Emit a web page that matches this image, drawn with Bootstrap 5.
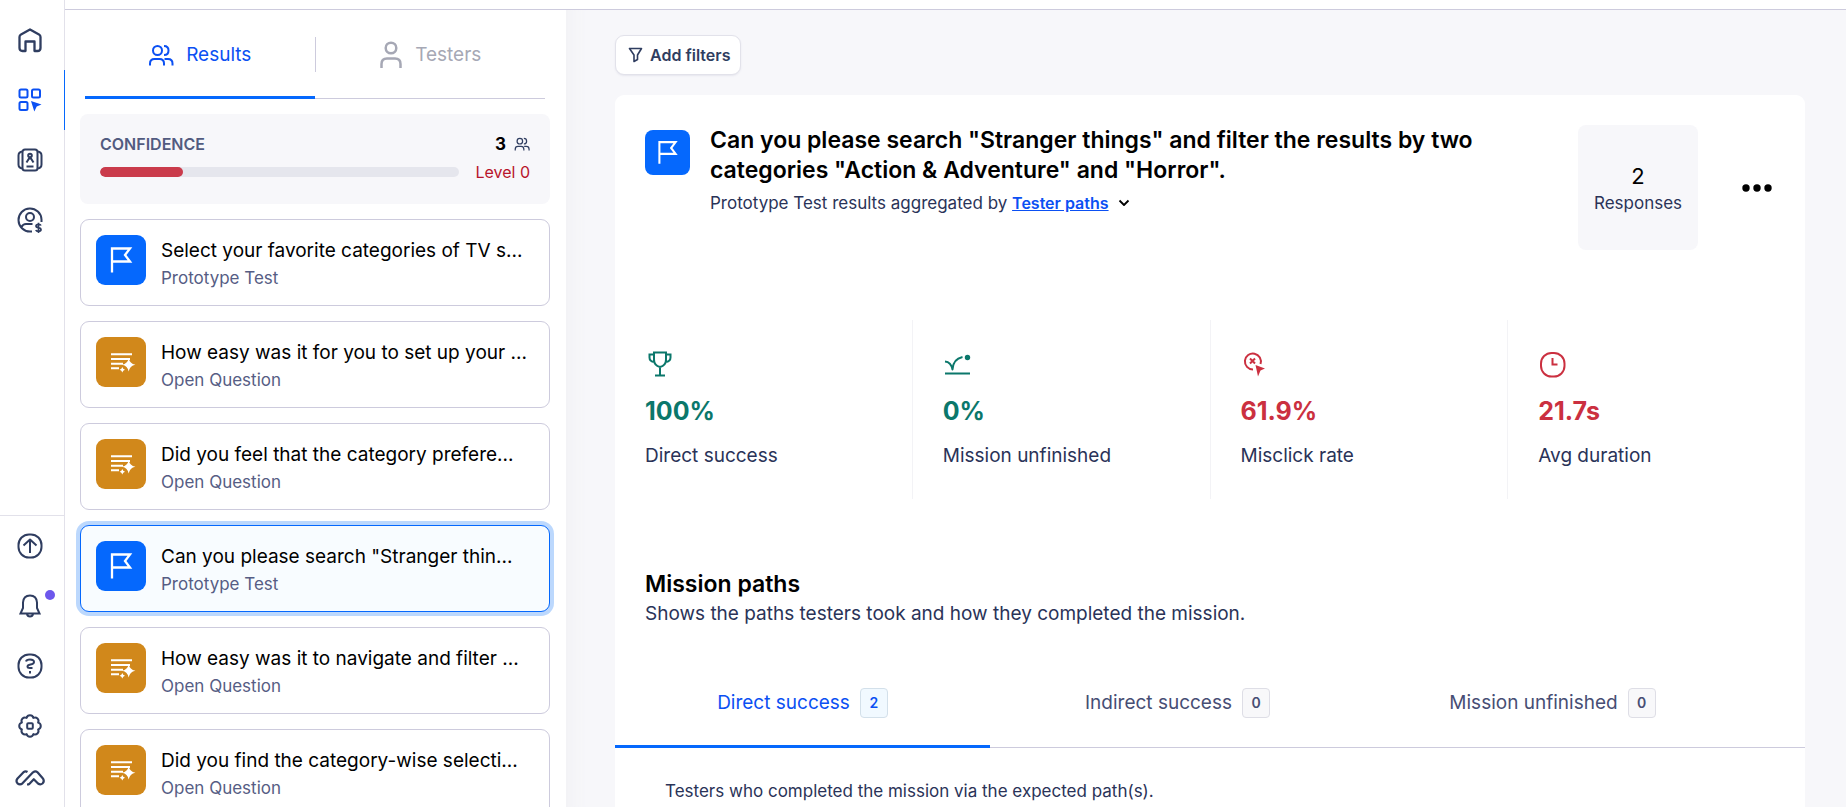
<!DOCTYPE html>
<html lang="en">
<head>
<meta charset="utf-8">
<meta name="viewport" content="width=device-width, initial-scale=1">
<title>Results</title>
<link href="https://cdn.jsdelivr.net/npm/bootstrap@5.3.0/dist/css/bootstrap.min.css" rel="stylesheet">
<style>
:root { --ink:#2f3d60; --blue:#0568fd; --link:#0b50f3; --line:#cdcbdd; --soft:#f7f7fa; }
body { font-family:Inter,"Liberation Sans",sans-serif; font-size:17px; line-height:26px; color:#2a3358; background:#fff; }
button { font:inherit; color:inherit; }
svg { display:block; flex:none; fill:none; stroke:currentColor; stroke-width:2; stroke-linejoin:round; }
.filled { fill:currentColor; stroke:none; }
.t19 { font-size:19px; line-height:30px; }
.t23 { font-size:23px; line-height:30px; font-weight:600; color:#000; }
.hide-bar { overflow:auto; scrollbar-width:none; }
.hide-bar::-webkit-scrollbar { display:none; }

/* icon rail */
.rail { width:65px; border-right:1px solid #e2e1ea; color:var(--ink); padding-top:10px; }
.rail a { position:relative; display:flex; align-items:center; justify-content:center; height:60px; padding-right:4px; color:inherit; }
.rail a.active { color:var(--link); }
.rail a.active::after { content:""; position:absolute; top:0; bottom:0; right:-1px; width:1px; background:var(--blue); }
.rail-foot { border-top:1px solid #e2e1ea; }
.rail .brand { height:51px; padding-bottom:8px; }
.dot { position:absolute; left:45px; top:14px; width:10px; height:10px; border-radius:50%; background:#6d57ec; }

.strip { height:10px; border-bottom:1px solid var(--line); }

/* question list */
.side { width:501px; padding:0 16px 15px 15px; gap:15px; }
.side > * { flex:none; }
.side-tabs { margin:0 5px; box-shadow:inset 0 -1px var(--line); }
.tabbtn { flex:1 1 0; display:flex; align-items:center; justify-content:center; border:0; border-bottom:3px solid transparent; background:none; padding:0; }
.tabbtn.active { color:var(--link); border-bottom-color:var(--blue); }
.side-tabs .tabbtn { height:89px; padding-top:3px; gap:12px; color:#a6a8b5; }
.side-tabs .tabbtn.active { color:var(--link); }
.rule { width:1px; height:35px; background:var(--line); }
.conf { background:var(--soft); border-radius:8px; padding:18px 20px 20px; line-height:24px; }
.conf-name { font-size:16px; font-weight:600; color:#525b80; }
.conf .progress { height:10px; border-radius:5px; background:#e5e6ed; }
.conf .progress-bar { background:#ca3b4b; border-radius:5px; }
.level { color:#b8142b; font-size:16px; }
.q { display:flex; gap:15px; width:100%; text-align:left; background:#fff; border:1px solid var(--line); border-radius:9px; padding:15px; }
.q.active { background:#f8fcff; border-color:var(--blue); box-shadow:0 0 0 4px #bcd8fd; }
.q-title { color:#000; line-height:32px; }
.q-kind { line-height:23px; color:#565d84; }
.tile { width:50px; height:50px; border-radius:9px; color:#fff; background:var(--blue); }
.tile.open { background:#d1881b; }
.tile.sm { width:45px; height:45px; margin-top:5px; border-radius:8px; }

/* detail area */
.detail { background:var(--soft); padding:25px 41px 0 49px; box-shadow:inset 24px 0 20px -20px #f1f1f4; }
.filter { display:flex; align-items:center; gap:7px; height:40px; padding:0 10px 0 12px; border:1px solid #e2e2ea; border-radius:9px; background:#fff; color:var(--ink); font-size:16px; font-weight:600; box-shadow:0 1px 2px #e6e6ee; }
.sheet { background:#fff; border-radius:9px; margin-top:20px; padding-bottom:60px; }
.head { padding:30px 30px 0; gap:20px; }
.head-by { padding-top:5px; }
.agg { color:var(--link); font-weight:600; font-size:16px; }
.count { width:120px; height:125px; border-radius:8px; background:var(--soft); margin-right:21px; padding-top:2px; }
.count-num { font-size:22px; line-height:28px; color:#000; }
.stats { margin-top:70px; }
.stat { flex:1 1 0; padding:30px 30px 28px; }
.stat + .stat { border-left:1px solid #f3f3f6; }
.stat-num { font-size:25px; line-height:36px; font-weight:700; margin:15px 0 12px; }
.good { color:#0b776b; }
.bad { color:#cb3040; }
.paths { padding:70px 30px 0; }
.path-tabs { margin-top:32px; padding-right:65px; box-shadow:inset 0 -1px var(--line); }
.path-tabs .tabbtn { height:87px; gap:10px; color:#474e74; }
.path-tabs .tabbtn.active { color:var(--link); }
.num { min-width:28px; height:30px; border:1px solid #dedee6; border-radius:4px; background:#f8f8fa; font-size:14px; line-height:28px; font-weight:600; }
.active .num { background:#f1f9ff; border-color:#d3e0ea; }
.note { padding:30px 50px 0; }
</style>
</head>
<body>
<svg class="d-none" aria-hidden="true">
  <symbol id="flag" viewBox="0 0 50 50"><path stroke-width="2.300" d="M16 37.500V13.500H34L29 20L34 26.500H16" stroke-linejoin="miter"/></symbol>
  <symbol id="ask" viewBox="0 0 50 50"><path d="M15 17.300H36M15 22H34M15 26.700H27M15 31.300H23"/><path class="filled" d="M32.700 21Q33.700 26.700 39.400 27.700Q33.700 28.700 32.700 34.400Q31.700 28.700 26 27.700Q31.700 26.700 32.700 21ZM26.300 30Q26.800 32.200 29 32.700Q26.800 33.200 26.300 35.400Q25.800 33.200 23.600 32.700Q25.800 32.200 26.300 30Z"/></symbol>
  <symbol id="people" viewBox="0 0 26 22"><path d="M2 21.500V19.500Q2 15 6.500 15H11.500Q16 15 16 19.500V21.500M16.500 15H20Q24.500 15 24.500 19.500V21.500"/><circle cx="9.500" cy="6.500" r="4.500"/><path d="M16 2Q20.500 2 20.500 6.500T16 11"/></symbol>
</svg>
<div class="d-flex vh-100 overflow-hidden">
  <nav class="rail d-flex flex-column flex-shrink-0" aria-label="Main">
    <a href="#" aria-label="Home"><svg width="26" height="26"><path stroke-width="2.300" d="M13 2.500L22 7.500Q23.500 8.300 23.500 10V21Q23.500 24 20.500 24H17.500V14.500H8.500V24H5.500Q2.500 24 2.500 21V10Q2.500 8.300 4 7.500Z"/></svg></a>
    <a href="#" class="active" aria-label="Projects"><svg width="26" height="26" stroke-width="2.500"><rect x="2.500" y="2.500" width="8" height="8" rx="1.500"/><rect x="15" y="2.500" width="8" height="8" rx="1.500"/><rect x="2.500" y="15" width="8" height="8" rx="1.500"/><path class="filled" d="M14 14L24.500 17.500L19.700 19.500L17.300 24.500Z"/></svg></a>
    <a href="#" aria-label="Panel"><svg width="26" height="26"><rect x="5.500" y="2.500" width="15" height="21" rx="2.500"/><path d="M5.500 4.500Q1.500 5 1.500 8.500V17.500Q1.500 21 5.500 21.500M20.500 4.500Q24.500 5 24.500 8.500V17.500Q24.500 21 20.500 21.500M9.500 19.500H16.500"/><circle cx="13" cy="8.500" r="1.800"/><path d="M9.500 15.500L12 11.500H14L16.500 15.500"/></svg></a>
    <a href="#" aria-label="Billing"><svg width="26" height="26"><path d="M24.500 15V12.500A11.500 11.500 0 1 0 13 24.500H15M4.500 20Q6 17 9 17H15.500"/><circle cx="13" cy="10" r="4"/><path stroke-width="1.700" d="M24 18.500Q23.500 17.300 21.500 17.300Q19 17.300 19 19Q19 20.500 21.500 20.800Q24 21 24 22.700Q24 24.300 21.500 24.300Q19.300 24.300 18.800 23M21.500 15.800V26"/></svg></a>
    <div class="rail-foot mt-auto">
      <a href="#" aria-label="Upgrade"><svg width="26" height="26"><rect x="1.500" y="1.500" width="23" height="23" rx="10.500"/><path d="M13 20V6.500M6.500 12.500L13 6.500L19.500 12.500"/></svg></a>
      <a href="#" aria-label="Notifications"><svg width="26" height="26"><path d="M3.500 20.500H22.500L20 15V9.500Q19.500 2.500 13 2.500T6 9.500V15ZM10 21Q10.500 23.500 13 23.500T16 21" stroke-linejoin="miter"/></svg><span class="dot"></span></a>
      <a href="#" aria-label="Help"><svg width="26" height="26"><rect x="1.500" y="1.500" width="23" height="23" rx="10.500"/><path d="M9 8.500Q9.500 6.500 13 6.500Q17 6.500 17 9Q17 11 13.500 11.500Q10.500 12 10.500 13.500Q10.500 15 13 15H15.500M13 18V20.500"/></svg></a>
      <a href="#" aria-label="Settings"><svg width="26" height="26"><path d="M9.600 4.900A3.500 3.500 0 0 1 16.400 4.900A3.500 3.500 0 0 1 21.100 9.600A3.500 3.500 0 0 1 21.100 16.400A3.500 3.500 0 0 1 16.400 21.100A3.500 3.500 0 0 1 9.600 21.100A3.500 3.500 0 0 1 4.900 16.400A3.500 3.500 0 0 1 4.900 9.600A3.500 3.500 0 0 1 9.600 4.900Z"/><rect x="10.200" y="10.200" width="5.600" height="5.600" rx="1"/></svg></a>
      <a href="#" class="brand" aria-label="Workspace"><svg width="30" height="18"><path stroke-width="2.200" d="M12.500 3Q10.500 1.700 8.500 3.200L2.500 9.500Q.5 12 2.500 14.300Q5 16.500 7.500 14.300L18 3.300Q20.500 1.500 22.500 3.300L27.500 9Q30 12 27.500 14.500Q25.500 16.200 23 14.500L18.800 10.200L14.500 14.700Q13.800 15.500 12 15.500"/></svg></a>
    </div>
  </nav>

  <div class="d-flex flex-column flex-grow-1 overflow-hidden">
    <div class="strip flex-shrink-0"></div>
    <div class="d-flex flex-grow-1 overflow-hidden">
      <aside class="side hide-bar d-flex flex-column flex-shrink-0">
        <div class="side-tabs d-flex align-items-center" role="tablist">
          <button class="tabbtn t19 active" role="tab" aria-selected="true"><svg width="26" height="22" stroke-width="2.500"><use href="#people"/></svg>Results</button>
          <span class="rule"></span>
          <button class="tabbtn t19" role="tab" aria-selected="false"><svg width="24" height="28"><g stroke-width="2.500"><circle cx="12" cy="7" r="5.300"/><path d="M2.500 27V23Q2.500 17.500 8 17.500H16Q21.500 17.500 21.500 23V27"/></g></svg>Testers</button>
        </div>
        <section class="conf">
          <div class="d-flex justify-content-between align-items-center mb-1">
            <span class="conf-name">CONFIDENCE</span>
            <span class="d-flex align-items-center gap-2 fw-bold text-black">3<svg width="16" height="14" style="color:var(--ink)"><use href="#people"/></svg></span>
          </div>
          <div class="d-flex align-items-center gap-3">
            <div class="progress flex-grow-1" role="progressbar" aria-label="Confidence" aria-valuenow="23" aria-valuemin="0" aria-valuemax="100"><div class="progress-bar" style="width:23%"></div></div>
            <span class="level">Level 0</span>
          </div>
        </section>
        <button class="q"><svg class="tile"><use href="#flag"/></svg><span><span class="t19 q-title d-block">Select your favorite categories of TV s...</span><span class="q-kind d-block">Prototype Test</span></span></button>
        <button class="q"><svg class="tile open"><use href="#ask"/></svg><span><span class="t19 q-title d-block">How easy was it for you to set up your ...</span><span class="q-kind d-block">Open Question</span></span></button>
        <button class="q"><svg class="tile open"><use href="#ask"/></svg><span><span class="t19 q-title d-block">Did you feel that the category prefere...</span><span class="q-kind d-block">Open Question</span></span></button>
        <button class="q active"><svg class="tile"><use href="#flag"/></svg><span><span class="t19 q-title d-block">Can you please search "Stranger thin...</span><span class="q-kind d-block">Prototype Test</span></span></button>
        <button class="q"><svg class="tile open"><use href="#ask"/></svg><span><span class="t19 q-title d-block">How easy was it to navigate and filter ...</span><span class="q-kind d-block">Open Question</span></span></button>
        <button class="q"><svg class="tile open"><use href="#ask"/></svg><span><span class="t19 q-title d-block">Did you find the category-wise selecti...</span><span class="q-kind d-block">Open Question</span></span></button>
      </aside>

      <main class="detail hide-bar flex-grow-1">
        <button class="filter"><svg width="15" height="16"><path stroke-width="1.600" d="M1.500 1.500H13.500L9.500 8V12.500L6 14.500V8Z"/></svg>Add filters</button>
        <article class="sheet">
          <header class="head d-flex align-items-start">
            <svg class="tile sm"><use href="#flag"/></svg>
            <div class="flex-grow-1">
              <h1 class="t23 mb-0">Can you please search "Stranger things" and filter the results by two categories "Action &amp; Adventure" and "Horror".</h1>
              <div class="head-by d-flex align-items-center">Prototype Test results aggregated by&nbsp;<a class="agg" href="#">Tester paths</a><svg class="ms-2 text-black" width="14" height="10"><path d="M2.500 2.500L7 7L11.500 2.500" stroke-width="1.800"/></svg></div>
            </div>
            <div class="count d-flex flex-column align-items-center justify-content-center flex-shrink-0"><span class="count-num">2</span><span>Responses</span></div>
            <button class="border-0 bg-transparent p-0 align-self-center text-black" aria-label="More"><svg class="filled" width="36" height="10"><circle cx="7" cy="5" r="3.700"/><circle cx="18" cy="5" r="3.700"/><circle cx="29" cy="5" r="3.700"/></svg></button>
          </header>

          <section class="stats d-flex">
            <div class="stat"><svg class="good" width="30" height="28"><path d="M9 2.500H21V9.500Q21 15.500 15 17Q9 15.500 9 9.500ZM9 4.500H4.500V7.500Q4.500 11.500 9.500 12M21 4.500H25.500V7.500Q25.500 11.500 20.500 12M15 17V25.500M10 25.500H20" stroke-linejoin="miter"/></svg><div class="stat-num good">100%</div><div class="t19">Direct success</div></div>
            <div class="stat"><svg class="good" width="30" height="28"><path d="M2 11.500Q8 12 9.500 19.500Q10 9 19.500 7M2 23.500H27"/><circle class="filled" cx="24.500" cy="7.500" r="2.700"/></svg><div class="stat-num good">0%</div><div class="t19">Mission unfinished</div></div>
            <div class="stat"><svg class="bad" width="30" height="28"><path d="M19.500 14A8 8 0 1 0 12 19.500M9 8.500L14 13.500M14 8.500L9 13.500"/><path class="filled" d="M14.500 15L24 18.500L19.500 20.500L17 26.500Z"/></svg><div class="stat-num bad">61.9%</div><div class="t19">Misclick rate</div></div>
            <div class="stat"><svg class="bad" width="30" height="28"><rect x="3" y="3" width="23.500" height="23.500" rx="10.500"/><path d="M14.500 8V14.500H19.500" stroke-linejoin="miter"/></svg><div class="stat-num bad">21.7s</div><div class="t19">Avg duration</div></div>
          </section>

          <section>
            <div class="paths">
              <h2 class="t23 mb-0">Mission paths</h2>
              <p class="t19 mb-0">Shows the paths testers took and how they completed the mission.</p>
            </div>
            <div class="path-tabs d-flex" role="tablist">
              <button class="tabbtn t19 active" role="tab" aria-selected="true">Direct success<span class="num">2</span></button>
              <button class="tabbtn t19" role="tab" aria-selected="false">Indirect success<span class="num">0</span></button>
              <button class="tabbtn t19" role="tab" aria-selected="false">Mission unfinished<span class="num">0</span></button>
            </div>
            <p class="note mb-0">Testers who completed the mission via the expected path(s).</p>
          </section>
        </article>
      </main>
    </div>
  </div>
</div>
<script src="https://cdn.jsdelivr.net/npm/bootstrap@5.3.0/dist/js/bootstrap.bundle.min.js"></script>
</body>
</html>
